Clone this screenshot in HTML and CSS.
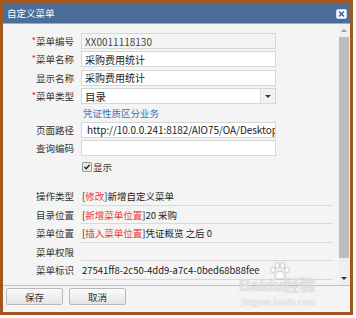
FILE: index.html
```html
<!DOCTYPE html>
<html lang="zh-CN">
<head>
    <meta charset="UTF-8">
    <title>自定义菜单</title>
    <link rel="stylesheet" href="styles.css">
</head>
<body>
    <div class="window">
        <div class="titlebar">
            <span class="title">自定义菜单</span>
            <span class="close">
                <svg width="11" height="10" viewBox="0 0 11 10">
                    <rect x="0.5" y="0.5" width="10" height="9" rx="1.5" fill="#fff" stroke="#c9d6e8"/>
                    <path d="M3 2.5 L8 7.5 M8 2.5 L3 7.5" stroke="#3b5f9a" stroke-width="1.6"/>
                </svg>
            </span>
        </div>
        <div class="main">
            <div class="form">
                <div class="fields">
                    <label class="lbl"><i>*</i>菜单编号</label>
                    <input class="field readonly" type="text" value="XX0011118130" readonly>

                    <label class="lbl"><i>*</i>菜单名称</label>
                    <input class="field" type="text" value="采购费用统计">

                    <label class="lbl">显示名称</label>
                    <input class="field" type="text" value="采购费用统计">

                    <label class="lbl"><i>*</i>菜单类型</label>
                    <div class="select">
                        <span class="select-text">目录</span>
                        <span class="select-btn"></span>
                    </div>

                    <span></span>
                    <a class="link">凭证性质区分业务</a>

                    <label class="lbl">页面路径</label>
                    <input class="field url" type="text" value="http://10.0.0.241:8182/AIO75/OA/Desktop">

                    <label class="lbl">查询编码</label>
                    <input class="field" type="text" value="">

                    <span></span>
                    <div class="check">
                        <span class="box">
                            <svg width="8" height="8" viewBox="0 0 8 8">
                                <path d="M1.5 4 L3.2 5.8 L6.6 1.8" fill="none" stroke="#222" stroke-width="1.4"/>
                            </svg>
                        </span>
                        <span>显示</span>
                    </div>
                </div>

                <div class="info">
                    <span class="lbl">操作类型</span>
                    <span class="val">[<em>修改</em>]新增自定义菜单</span>

                    <span class="lbl">目录位置</span>
                    <span class="val">[<em>新增菜单位置</em>]20 采购</span>

                    <span class="lbl">菜单位置</span>
                    <span class="val">[<em>插入菜单位置</em>]凭证概览 之后 0</span>

                    <span class="lbl">菜单权限</span>
                    <span class="val"></span>

                    <span class="lbl">菜单标识</span>
                    <span class="val">27541ff8-2c50-4dd9-a7c4-0bed68b88fee</span>
                </div>
            </div>
            <div class="scrollbar">
                <span class="arrow up"></span>
                <span class="thumb"></span>
                <span class="arrow down"></span>
            </div>
        </div>
        <div class="footer">
            <button class="btn">保存</button>
            <button class="btn">取消</button>
        </div>
        <div class="watermark">
            <svg class="wm-paw" width="24" height="18" viewBox="0 0 24 18">
                <g fill="rgba(255,255,255,0.6)" stroke="rgba(130,130,130,0.5)" stroke-width="0.8">
                    <ellipse cx="5" cy="8" rx="2.4" ry="3"/>
                    <ellipse cx="9.5" cy="3.5" rx="2.4" ry="3"/>
                    <ellipse cx="14.5" cy="3.5" rx="2.4" ry="3"/>
                    <ellipse cx="19" cy="8" rx="2.4" ry="3"/>
                    <path d="M12 9 C8 9 6 14 7.5 16 C9 17.5 15 17.5 16.5 16 C18 14 16 9 12 9 Z"/>
                </g>
            </svg>
            <span class="wm-logo">Baidu经验</span>
            <span class="wm-url">jingyan.baidu.com</span>
        </div>
    </div>
</body>
</html>
```

FILE: styles.css
```css
body {
    margin: 0;
    background: #fff;
    font-family: "Noto Sans CJK SC", "Liberation Sans", sans-serif;
    font-size: 9.5px;
    color: #333;
}
.window {
    position: relative;
    width: 347px;
    height: 309px;
    border: 3px solid #a4561f;
    background: #f4f4f4;
    display: flex;
    flex-direction: column;
}
.titlebar {
    height: 20px;
    background: #4a6d99;
    border-bottom: 1px solid #8fb0d8;
    display: flex;
    align-items: center;
    justify-content: space-between;
    padding: 0 3px 0 4px;
}
.title {
    color: #fff;
    font-size: 9.5px;
    line-height: 20px;
}
.close {
    display: flex;
    margin-top: 1px;
}
.main {
    height: 261px;
    display: flex;
}
.form {
    flex: 1;
    padding: 9px 6px 0 0;
}
.fields {
    display: grid;
    grid-template-columns: 71px 195px;
    column-gap: 7px;
    row-gap: 2.4px;
    align-items: center;
}
.lbl {
    text-align: right;
    white-space: nowrap;
    color: #333;
}
.lbl i {
    font-style: normal;
    color: #e02020;
    font-size: 9px;
    vertical-align: 1px;
}
.field {
    box-sizing: border-box;
    width: 195px;
    height: 16px;
    margin: 0;
    padding: 0 3px;
    border: 1px solid #d6d6d6;
    background: #fff;
    font-family: "Noto Sans CJK SC", "Liberation Sans", sans-serif;
    font-size: 10px;
    color: #222;
    outline: none;
}
.field.readonly {
    background: #f4f4f4;
    color: #444;
}
.field.url {
    padding-left: 5px;
    padding-right: 0;
    letter-spacing: -0.05px;
}
.select {
    box-sizing: border-box;
    height: 16px;
    border: 1px solid #d6d6d6;
    background: #fff;
    display: flex;
    align-items: center;
}
.select-text {
    flex: 1;
    padding-left: 3px;
    font-size: 10.5px;
    color: #222;
}
.select-btn {
    width: 14px;
    height: 14px;
    border-left: 1px solid #e0e0e0;
    background: #f2f2f2;
    position: relative;
}
.select-btn::after {
    content: "";
    position: absolute;
    left: 4px;
    top: 6px;
    border-left: 3px solid transparent;
    border-right: 3px solid transparent;
    border-top: 3px solid #333;
}
.link {
    height: 13px;
    line-height: 13px;
    color: #3a70c4;
    padding-left: 2px;
}
.check {
    height: 16px;
    display: flex;
    align-items: center;
    gap: 1px;
    padding-left: 1px;
}
.box {
    width: 8px;
    height: 8px;
    border: 1px solid #9a9a9a;
    border-radius: 1px;
    background: #e8e8e8;
    display: flex;
}
.info {
    display: grid;
    grid-template-columns: 71px 1fr;
    column-gap: 7px;
    margin-top: 12.5px;
}
.info .lbl {
    line-height: 18px;
}
.val {
    height: 18.5px;
    line-height: 18px;
    box-sizing: border-box;
    border-bottom: 1px solid #d9d9d9;
    padding-left: 1px;
    white-space: nowrap;
    color: #222;
}
.val em {
    font-style: normal;
    color: #e83a3a;
}
.scrollbar {
    width: 11px;
    background: #efefef;
    display: flex;
    flex-direction: column;
    align-items: flex-start;
}
.arrow {
    width: 10px;
    height: 13px;
    position: relative;
}
.arrow::after {
    content: "";
    position: absolute;
    left: 2px;
    border-left: 3px solid transparent;
    border-right: 3px solid transparent;
}
.arrow.up::after {
    top: 5px;
    border-bottom: 3px solid #a0a0a0;
}
.arrow.down {
    margin-top: auto;
}
.arrow.down::after {
    top: 5px;
    border-top: 3px solid #333;
}
.thumb {
    width: 10px;
    height: 221px;
    background: #bdbdbd;
}
.footer {
    flex: 1;
    border-top: 1px solid #a9c6ea;
    display: flex;
    align-items: flex-start;
    gap: 6px;
    padding: 2px 0 0 3px;
}
.btn {
    width: 57px;
    height: 17px;
    margin: 0;
    padding: 0;
    border: 1px solid #b9b9b9;
    border-radius: 2px;
    background: linear-gradient(#fbfbfb, #e4e4e4);
    font-family: "Noto Sans CJK SC", "Liberation Sans", sans-serif;
    font-size: 9.5px;
    color: #333;
}
.watermark {
    position: absolute;
    left: 234px;
    top: 259px;
    width: 92px;
    height: 46px;
    pointer-events: none;
}
.wm-paw {
    position: absolute;
    left: 31px;
    top: 0;
}
.wm-logo {
    position: absolute;
    left: 2px;
    top: 14px;
    font-family: "Liberation Sans", "Noto Sans CJK SC", sans-serif;
    font-size: 16px;
    font-weight: bold;
    line-height: 20px;
    color: rgba(255, 255, 255, 0.65);
    text-shadow: 0 0 1px rgba(120, 120, 120, 0.55);
}
.wm-url {
    position: absolute;
    left: 4px;
    top: 34px;
    font-family: "Liberation Serif", serif;
    font-size: 10px;
    line-height: 12px;
    color: rgba(255, 255, 255, 0.65);
    text-shadow: 0 0 1px rgba(120, 120, 120, 0.5);
}
```
